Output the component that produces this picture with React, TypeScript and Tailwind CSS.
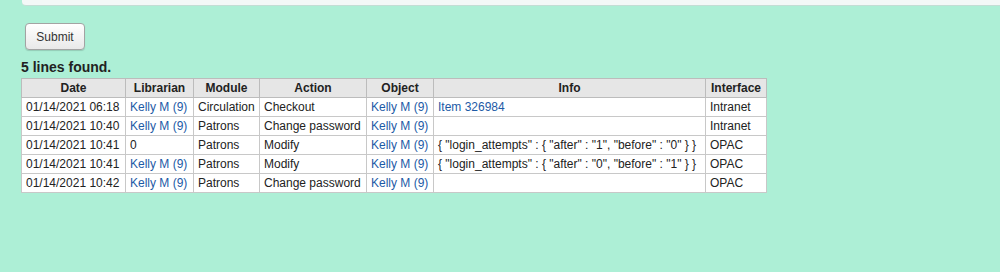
const rows = [
  { date: '01/14/2021 06:18', lib: 'Kelly M (9)', module: 'Circulation', action: 'Checkout', object: 'Kelly M (9)', info: 'Item 326984', infoLink: true, iface: 'Intranet' },
  { date: '01/14/2021 10:40', lib: 'Kelly M (9)', module: 'Patrons', action: 'Change password', object: 'Kelly M (9)', info: '', infoLink: false, iface: 'Intranet' },
  { date: '01/14/2021 10:41', lib: '0', module: 'Patrons', action: 'Modify', object: 'Kelly M (9)', info: '{ "login_attempts" : { "after" : "1", "before" : "0" } }', infoLink: false, iface: 'OPAC' },
  { date: '01/14/2021 10:41', lib: 'Kelly M (9)', module: 'Patrons', action: 'Modify', object: 'Kelly M (9)', info: '{ "login_attempts" : { "after" : "0", "before" : "1" } }', infoLink: false, iface: 'OPAC' },
  { date: '01/14/2021 10:42', lib: 'Kelly M (9)', module: 'Patrons', action: 'Change password', object: 'Kelly M (9)', info: '', infoLink: false, iface: 'OPAC' },
];

const th = 'border border-[#bcbcbc] bg-[#e6e6e6] px-[4px] py-[2px] font-bold text-center whitespace-nowrap';
const td = 'border border-[#c8c8c8] bg-white px-[4px] py-[2px] whitespace-nowrap align-top';
const link = 'text-[#1d5aa6]';

export default function App() {
  return (
    <div className="w-[1000px] h-[272px] bg-[#adefd6] font-['Liberation_Sans',Arial,sans-serif] text-[#222] overflow-hidden">
      <div className="ml-[22px] h-[6px] bg-[#f3f8f7] border-b border-[#c4ddd5] rounded-bl-[4px]" />
      <div className="px-[21px]">
        <button className="mt-[17px] ml-[4px] w-[60px] h-[27px] rounded-[4px] border border-[#a3a3a3] bg-gradient-to-b from-white to-[#e9e9e9] text-[12px] text-[#333] shadow-[0_1px_1px_rgba(0,0,0,0.15)]">
          Submit
        </button>
        <div className="mt-[9px] text-[14px] leading-[17px] font-bold text-[#222]">5 lines found.</div>
        <table className="mt-[2px] border-collapse text-[12px] leading-[14px]">
          <thead>
            <tr>
              <th className={`${th} w-[104px]`}>Date</th>
              <th className={`${th} w-[68px]`}>Librarian</th>
              <th className={`${th} w-[66px]`}>Module</th>
              <th className={`${th} w-[107px]`}>Action</th>
              <th className={`${th} w-[67px]`}>Object</th>
              <th className={`${th} w-[272px]`}>Info</th>
              <th className={`${th} w-[61px]`}>Interface</th>
            </tr>
          </thead>
          <tbody>
            {rows.map((r, i) => (
              <tr key={i}>
                <td className={td}>{r.date}</td>
                <td className={td}>{r.lib === '0' ? r.lib : <span className={link}>{r.lib}</span>}</td>
                <td className={td}>{r.module}</td>
                <td className={td}>{r.action}</td>
                <td className={td}><span className={link}>{r.object}</span></td>
                <td className={td}>{r.infoLink ? <span className={link}>{r.info}</span> : r.info}</td>
                <td className={td}>{r.iface}</td>
              </tr>
            ))}
          </tbody>
        </table>
      </div>
    </div>
  );
}
